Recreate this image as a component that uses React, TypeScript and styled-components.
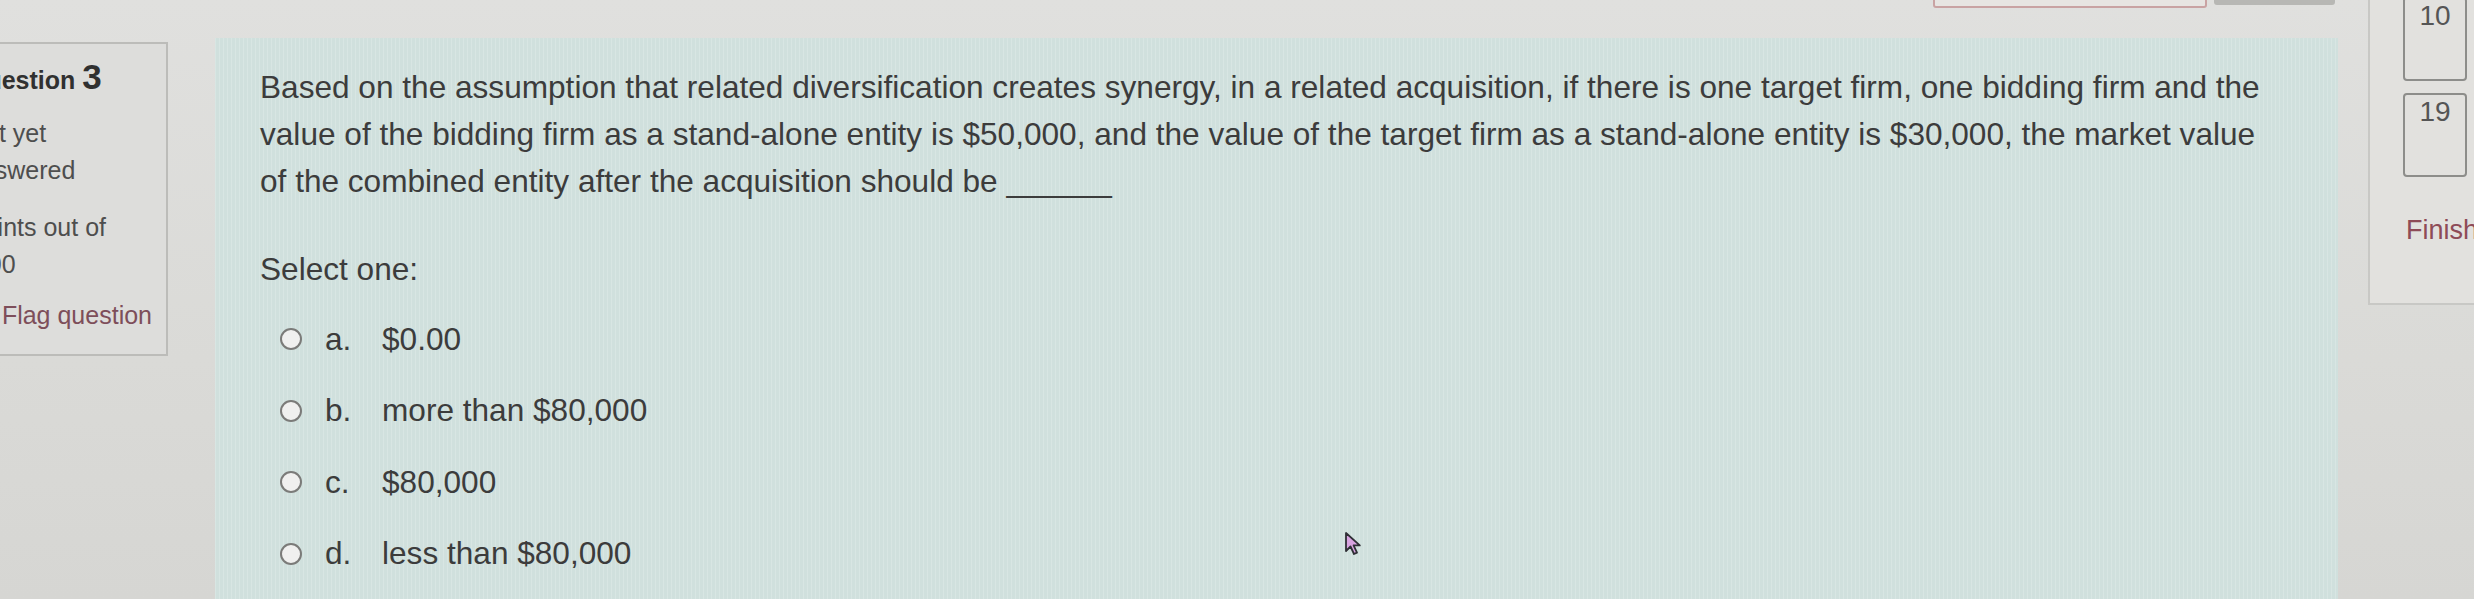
import React from 'react'
import styled, { createGlobalStyle } from 'styled-components'

const GlobalStyle = createGlobalStyle`
  html, body {
    margin: 0;
    padding: 0;
    overflow: hidden;
    background: #dcdcd9;
  }
  body {
    font-family: 'Liberation Sans', Arial, sans-serif;
  }
`

type Option = {
  letter: string
  text: string
}

const options: Option[] = [
  { letter: 'a.', text: '$0.00' },
  { letter: 'b.', text: 'more than $80,000' },
  { letter: 'c.', text: '$80,000' },
  { letter: 'd.', text: 'less than $80,000' },
]

const FlagIcon = () => (
  <svg width="22" height="24" viewBox="0 0 22 24" fill="none">
    <path d="M3 2v21" stroke="#7d4e5a" strokeWidth="2.4" strokeLinecap="round" />
    <path
      d="M3 3h14l-3.5 5L17 13H3"
      stroke="#7d4e5a"
      strokeWidth="2.2"
      strokeLinejoin="round"
    />
  </svg>
)

const Cursor = () => (
  <svg width="20" height="26" viewBox="0 0 20 26">
    <path
      d="M2 2 L2 20 L6.5 15.5 L10 23 L13 21.6 L9.6 14.4 L15.8 14.4 Z"
      fill="#d8a3e0"
      stroke="#2f2f35"
      strokeWidth="1.8"
      strokeLinejoin="round"
    />
  </svg>
)

const App: React.FC = () => {
  return (
    <Page>
      <GlobalStyle />

      <InfoBox>
        <QuestionNo>
          Question <span>3</span>
        </QuestionNo>
        <InfoLine>Not yet answered</InfoLine>
        <InfoLine $gap={20}>Points out of 1.00</InfoLine>
        <FlagLink $gap={14}>
          <FlagIcon />
          Flag question
        </FlagLink>
      </InfoBox>

      <MainColumn>
        <TopBar>
          <TopButton $variant="outline" />
          <TopButton $variant="filled" />
        </TopBar>
        <Panel>
          <QuestionText>
            Based on the assumption that related diversification creates synergy, in a related
            acquisition, if there is one target firm, one bidding firm and the
            <br />
            value of the bidding firm as a stand-alone entity is $50,000, and the value of the
            target firm as a stand-alone entity is $30,000, the market value
            <br />
            of the combined entity after the acquisition should be ______
          </QuestionText>
          <Prompt>Select one:</Prompt>
          <Answers>
            {options.map((o) => (
              <AnswerRow key={o.letter}>
                <Radio />
                <Letter>{o.letter}</Letter>
                <span>{o.text}</span>
              </AnswerRow>
            ))}
          </Answers>
        </Panel>
      </MainColumn>

      <NavPanel>
        <NavButtons>
          <NavButton>10</NavButton>
          <NavButton>19</NavButton>
        </NavButtons>
        <FinishLink>Finish attempt ...</FinishLink>
      </NavPanel>

      <Pointer>
        <Cursor />
      </Pointer>
    </Page>
  )
}

const Page = styled.div`
  position: relative;
  display: flex;
  align-items: flex-start;
  width: 2474px;
  height: 599px;
  overflow: hidden;
  background: linear-gradient(180deg, #e0e0de 0%, #dadad7 60%, #d6d6d3 100%);
`

const InfoBox = styled.aside`
  flex: none;
  box-sizing: border-box;
  width: 228px;
  height: 314px;
  margin: 42px 0 0 -60px;
  padding: 15px 14px 0 25px;
  border: 2px solid #bcbcb9;
  background: #dddddb;
  color: #4e4e4e;
  font-size: 25px;
`

const QuestionNo = styled.div`
  line-height: 40px;
  font-weight: 700;
  color: #303030;

  span {
    font-size: 35px;
    line-height: 1;
  }
`

const InfoLine = styled.div<{ $gap?: number }>`
  margin-top: ${(p) => p.$gap ?? 15}px;
  line-height: 37px;
`

const FlagLink = styled.div<{ $gap?: number }>`
  display: flex;
  align-items: center;
  gap: 14px;
  margin-top: ${(p) => p.$gap ?? 12}px;
  line-height: 37px;
  color: #7d4e5a;
  white-space: nowrap;
`

const MainColumn = styled.div`
  flex: none;
  display: flex;
  flex-direction: column;
  width: 2123px;
  height: 640px;
  margin-left: 47px;
`

const TopBar = styled.div`
  display: flex;
  justify-content: flex-end;
  align-items: flex-start;
  gap: 7px;
  height: 38px;
  padding-right: 3px;
`

const TopButton = styled.div<{ $variant: 'outline' | 'filled' }>`
  box-sizing: border-box;
  width: ${(p) => (p.$variant === 'outline' ? 274 : 121)}px;
  height: 40px;
  margin-top: ${(p) => (p.$variant === 'outline' ? -32 : -35)}px;
  border-radius: 3px;
  border: 2px solid ${(p) => (p.$variant === 'outline' ? '#c9a3a3' : '#b7b7b4')};
  background: ${(p) => (p.$variant === 'outline' ? '#e7e5e2' : '#b7b7b4')};
`

const Panel = styled.section`
  flex: 1;
  padding: 26px 0 0 45px;
  background-color: #d0e0dd;
  background-image: repeating-linear-gradient(
    90deg,
    rgba(255, 255, 255, 0.18) 0 1px,
    rgba(255, 255, 255, 0) 1px 4px
  );
  color: #3c3c3c;
  font-size: 31.6px;
`

const QuestionText = styled.p`
  margin: 0;
  line-height: 47px;
  white-space: nowrap;
`

const Prompt = styled.div`
  margin-top: 41px;
  line-height: 47px;
`

const Answers = styled.div`
  margin-top: 10.5px;
`

const AnswerRow = styled.div`
  display: flex;
  align-items: center;
  height: 71.5px;
  padding-left: 20px;
  white-space: nowrap;
`

const Radio = styled.span`
  flex: none;
  box-sizing: border-box;
  width: 22px;
  height: 22px;
  border-radius: 50%;
  border: 2px solid #7b7b79;
  background: #f0f0ef;
`

const Letter = styled.span`
  width: 57px;
  margin-left: 23px;
`

const NavPanel = styled.nav`
  flex: none;
  box-sizing: border-box;
  width: 150px;
  height: 325px;
  margin: -20px 0 0 30px;
  padding: 15px 0 0 33px;
  border: 2px solid #c8c8c5;
  border-right: none;
  background: #e2e1de;
`

const NavButtons = styled.div`
  display: flex;
  flex-direction: column;
  gap: 12px;
`

const NavButton = styled.div`
  box-sizing: border-box;
  width: 64px;
  height: 84px;
  padding-top: 3px;
  border: 2px solid #8d8d8a;
  border-radius: 4px;
  text-align: center;
  font-size: 28px;
  line-height: 1;
  color: #555555;
`

const FinishLink = styled.div`
  margin: 38px 0 0 3px;
  font-size: 27px;
  line-height: 30px;
  color: #8e4b57;
  white-space: nowrap;
`

const Pointer = styled.div`
  position: absolute;
  left: 1344px;
  top: 531px;
  line-height: 0;
`

export default App
